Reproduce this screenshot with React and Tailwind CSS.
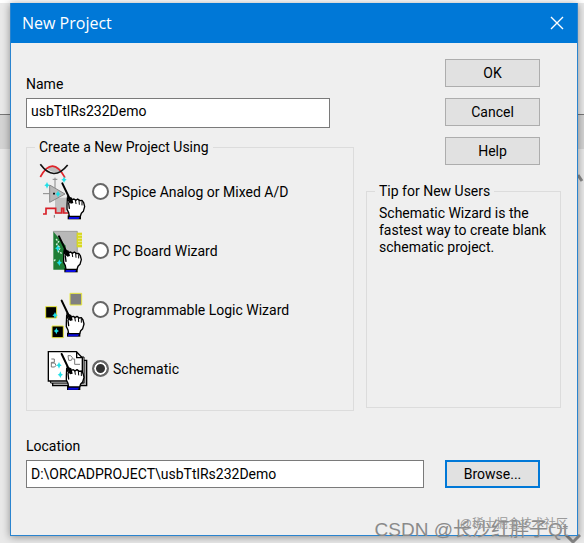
import { useState } from 'react';

// origin is the tip of the pointer
const Hand = ({ x, y }) => (
  <g transform={`translate(${x} ${y})`} strokeLinejoin="round" strokeLinecap="round">
    <path d="M17 97h40v12H17z" fill="#000" />
    <path d="M22 99h32l-4 9H20z" fill="#0a0ae0" />
    <path
      d="M16 44l6 14 8-8 6-2 5 4 6-4 7 5 6-1 5 7 3 12-4 14-6 6-3 9H22l-2-11-5-10V68z"
      fill="#fff"
      stroke="#000"
      strokeWidth="4"
    />
    <path d="M40 50l2 12M51 52l1 12M60 56v10" stroke="#000" strokeWidth="3" />
    <path d="M1 1l22 46" stroke="#000" strokeWidth="6" />
    <path d="M14 38l12 24 8-2-4-16z" fill="#000" />
    <path d="M20 60l2 16" stroke="#000" strokeWidth="4" />
  </g>
);

const Star = ({ x, y }) => (
  <path transform={`translate(${x} ${y})`} d="M0-10L3-3 8 0 3 3 0 10-3 3-8 0-3-3z" fill="#1ee0e8" />
);

const PSpiceIcon = () => (
  <svg viewBox="57 21 159 177" className="h-[59px] w-[53px] shrink-0" aria-hidden="true">
    <path d="M80 40q20-18 44 4-18 18-44-4z" fill="#bbb" />
    <path d="M61 66q36-66 74 2" fill="none" stroke="#e0252b" strokeWidth="5" />
    <path d="M61 28q40 54 82 2" fill="none" stroke="#111" strokeWidth="5" />
    <path d="M105 68v32M98 73h14M69 116h20" stroke="#888" strokeWidth="3" />
    <path d="M105 128h34v48h-34z" fill="#c0c0c0" />
    <path d="M89 90v52l46-25z" fill="#b8b8b8" stroke="#888" strokeWidth="3" />
    <path d="M69 177h9v-17h29v14h18v-14h6v14h14" fill="none" stroke="#d82028" strokeWidth="5" />
    <path d="M103 180v8" stroke="#777" strokeWidth="3" />
    <Star x={81} y={91} />
    <Star x={132} y={74} />
    <Star x={114} y={117} />
    <path d="M99 116h6" stroke="#111" strokeWidth="5" />
    <Hand x={126} y={84} />
  </svg>
);

const BoardIcon = () => (
  <svg viewBox="57 198 159 177" className="h-[59px] w-[53px] shrink-0" aria-hidden="true">
    <path d="M100 229h72v70h-40z" fill="#b8b8b8" stroke="#888" strokeWidth="2" />
    <path d="M100 230l37 42v72h-37z" fill="#1f7d35" />
    <path d="M170 233h16v44h-16z" fill="#d8d820" />
    <path d="M174 241h12m-12 9h12m-12 9h12m-12 9h12" stroke="#f4f4d0" strokeWidth="2" />
    <path d="M108 252l8 8-6 8 10 10-5 12 12 6M102 318l6-6" fill="none" stroke="#d6f2df" strokeWidth="4" strokeDasharray="6 3" />
    <Star x={113} y={280} />
    <Star x={118} y={323} />
    <Hand x={116} y={243} />
  </svg>
);

const LogicIcon = () => (
  <svg viewBox="57 15 159 177" className="h-[59px] w-[53px] shrink-0" aria-hidden="true">
    <path d="M150 55h35v35h-35z" fill="#808080" stroke="#e8e840" strokeWidth="3" />
    <path d="M77 95h33v34H77zM96 153h34v35H96z" fill="#000" stroke="#e8e840" strokeWidth="3" />
    <Star x={105} y={121} />
    <Star x={109} y={168} />
    <Hand x={124} y={76} />
  </svg>
);

const SchematicIcon = () => (
  <svg viewBox="57 192 159 177" className="h-[59px] w-[53px] shrink-0" aria-hidden="true">
    <path d="M98 256h102v76H98z" fill="#aaa" stroke="#000" strokeWidth="4" />
    <path d="M92 246h100v78H92z" fill="#fff" stroke="#000" strokeWidth="3" />
    <path d="M85 230h84l18 18v70H85z" fill="#fff" stroke="#000" strokeWidth="4" />
    <path d="M170 230v18h17" fill="none" stroke="#000" strokeWidth="4" />
    <path d="M94 252h9v10h-9v14h10m-10-12h10q8 8 0 12M144 242h8q10 6 2 14h-8zM158 252h6v16h16" fill="none" stroke="#777" strokeWidth="3" />
    <Star x={117} y={271} />
    <Star x={121} y={299} />
    <Hand x={124} y={236} />
  </svg>
);

const projectTypes = [
  { id: 'pspice', label: 'PSpice Analog or Mixed A/D', Icon: PSpiceIcon },
  { id: 'board', label: 'PC Board Wizard', Icon: BoardIcon },
  { id: 'logic', label: 'Programmable Logic Wizard', Icon: LogicIcon },
  { id: 'schematic', label: 'Schematic', Icon: SchematicIcon },
];

const buttonClass = 'h-7 w-[95px] border border-[#adadad] bg-[#e1e1e1]';
const inputClass = 'border border-[#7a7a7a] bg-white px-1 outline-none';

const App = () => {
  const [name, setName] = useState('usbTtlRs232Demo');
  const [location, setLocation] = useState('D:\\ORCADPROJECT\\usbTtlRs232Demo');
  const [type, setType] = useState('schematic');

  return (
    <div className="relative bg-[#e9e9e9] pt-[3px] pr-[6px] pb-2 pl-[10px] font-['Roboto','Liberation_Sans',sans-serif] text-sm leading-5 text-black">
      {/* window behind the dialog */}
      <div className="absolute inset-x-0 top-0 h-[3px] bg-white" />
      <div className="absolute inset-x-0 top-[114px] h-[35px] border-t border-[#777] bg-[#d4d4d4]" />
      <svg viewBox="0 0 16 10" className="absolute right-[3px] bottom-0 h-[10px] w-4" aria-hidden="true">
        <path d="M1 1l7 7 7-7" fill="none" stroke="#8a8a8a" strokeWidth="3" />
      </svg>
      <svg viewBox="0 0 6 8" className="absolute top-[174px] right-0 h-2 w-[6px]" aria-hidden="true">
        <path d="M0 1l4 6" fill="none" stroke="#8a8a8a" strokeWidth="3" />
      </svg>

      <div className="relative border border-t-0 border-[#2a84cf] bg-[#efefef] shadow-[0_1px_8px_rgba(0,0,0,0.4)]">
        <header className="flex h-10 items-center justify-between bg-[#0078d7] pr-[13px] pl-[11px] text-white">
          <h1 className="font-['Open_Sans',sans-serif] text-base">New Project</h1>
          <button type="button" aria-label="Close">
            <svg viewBox="0 0 14 14" className="size-[14px]" aria-hidden="true">
              <path d="M1 1l12 12M13 1L1 13" stroke="#fff" strokeWidth="1.4" />
            </svg>
          </button>
        </header>

        <form className="pt-4 pr-4 pb-[47px] pl-[15px]" onSubmit={(e) => e.preventDefault()}>
          <div className="flex gap-3">
            <div className="flex flex-1 flex-col">
              <label htmlFor="name" className="mt-[15px]">Name</label>
              <input
                id="name"
                className={`mt-1 mr-6 h-[30px] pb-1 ${inputClass}`}
                value={name}
                onChange={(e) => setName(e.target.value)}
              />
              <fieldset className="mt-[9px] border border-[#dcdcdc] pt-[5px] pb-3 pl-3">
                <legend className="-ml-1 px-1">Create a New Project Using</legend>
                {projectTypes.map(({ id, label, Icon }) => (
                  <label key={id} className="flex items-center">
                    <Icon />
                    <input
                      type="radio"
                      name="type"
                      className="size-[17px] shrink-0 appearance-none rounded-full border-2 border-[#666] bg-white checked:bg-[#333] checked:shadow-[inset_0_0_0_2px_white]"
                      checked={type === id}
                      onChange={() => setType(id)}
                    />
                    <span className="ml-1">{label}</span>
                  </label>
                ))}
              </fieldset>
            </div>

            <div className="flex w-[195px] flex-col pb-[3px]">
              <div className="flex flex-col items-end gap-[11px] pr-[21px]">
                <button type="submit" className={buttonClass}>OK</button>
                <button type="button" className={buttonClass}>Cancel</button>
                <button type="button" className={buttonClass}>Help</button>
              </div>
              <fieldset className="mt-4 flex-1 border border-[#dcdcdc] px-3 pt-1">
                <legend className="-ml-1 px-1">Tip for New Users</legend>
                <p className="leading-[17px]">Schematic Wizard is the fastest way to create blank schematic project.</p>
              </fieldset>
            </div>
          </div>

          <label htmlFor="location" className="mt-[25px] block">Location</label>
          <div className="mt-1 flex justify-between gap-[21px] pr-[21px]">
            <input
              id="location"
              className={`h-7 flex-1 ${inputClass}`}
              value={location}
              onChange={(e) => setLocation(e.target.value)}
            />
            <button type="button" className="h-7 w-[95px] border-2 border-[#0078d7] bg-[#e1e1e1]">Browse...</button>
          </div>
        </form>
      </div>

      <span className="absolute right-4 bottom-1 font-['Liberation_Sans','Noto_Sans_CJK_SC',sans-serif] text-[19px] text-[#8a8a8a]">CSDN @长沙红胖子Qt</span>
      <span className="absolute right-4 bottom-3 font-['Liberation_Sans','Noto_Sans_CJK_SC',sans-serif] text-xs text-[#9a9a9a]">@稀土掘金技术社区</span>
    </div>
  );
};

export default App;
